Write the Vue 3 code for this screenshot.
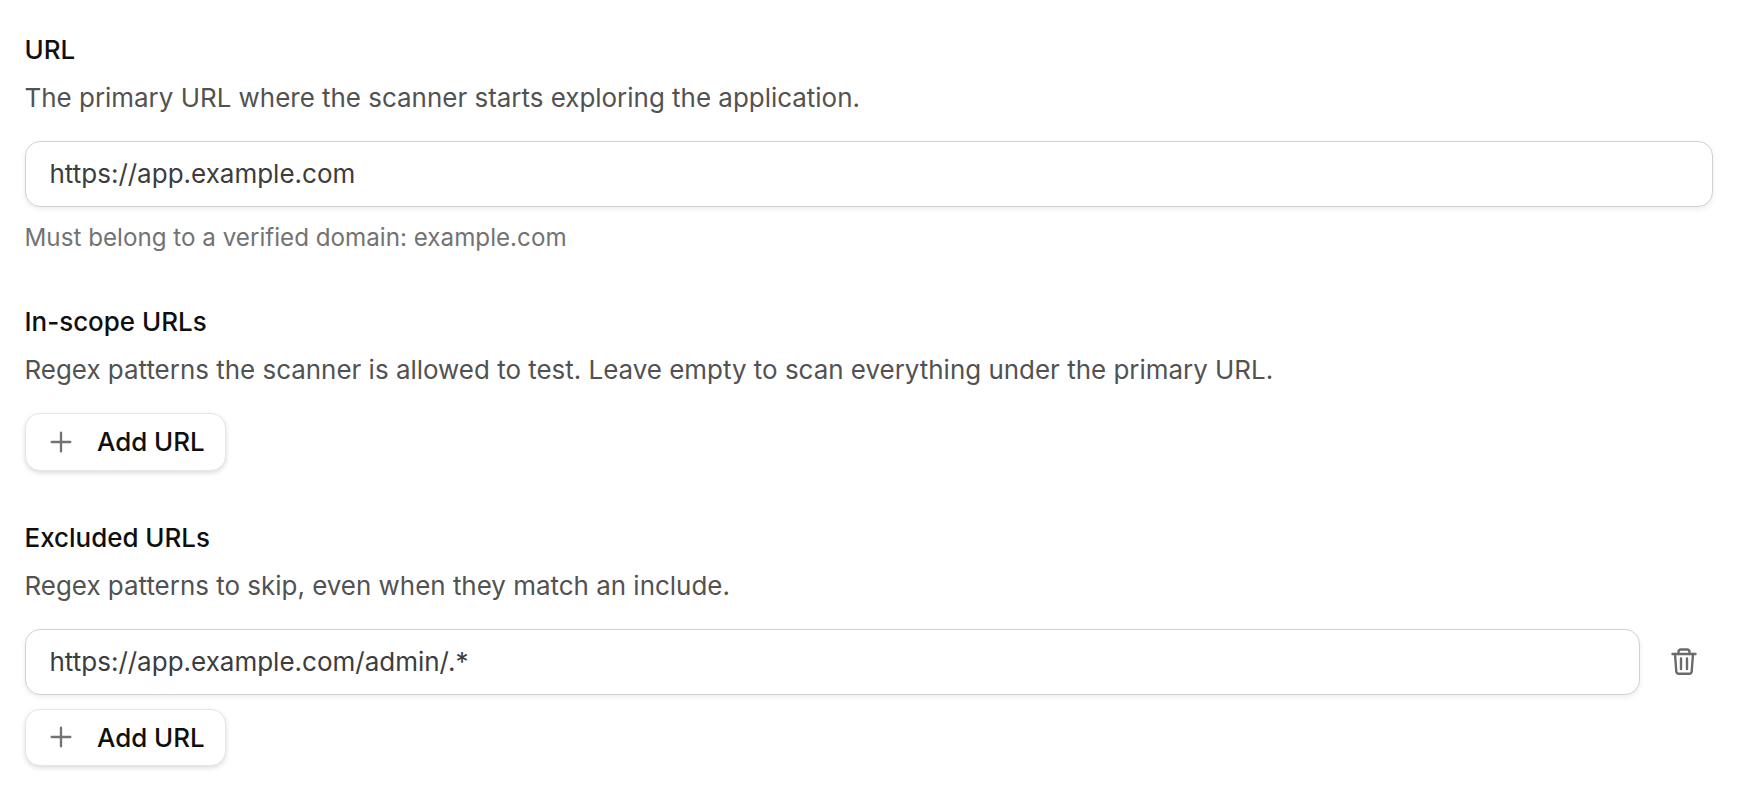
<script setup>
const plus = 'M4 12h16M12 4v16'
</script>

<template>
  <main class="form">
    <section class="field">
      <h3 class="label">URL</h3>
      <p class="desc">The primary URL where the scanner starts exploring the application.</p>
      <div class="input">https://app.example.com</div>
      <p class="hint">Must belong to a verified domain: example.com</p>
    </section>

    <section class="field compact">
      <h3 class="label">In-scope URLs</h3>
      <p class="desc">Regex patterns the scanner is allowed to test. Leave empty to scan everything under the primary URL.</p>
      <button class="add" type="button">
        <svg class="plus" viewBox="0 0 24 24" fill="none" stroke="currentColor" stroke-width="2" stroke-linecap="round"><path :d="plus" /></svg>
        <span>Add URL</span>
      </button>
    </section>

    <section class="field">
      <h3 class="label">Excluded URLs</h3>
      <p class="desc">Regex patterns to skip, even when they match an include.</p>
      <div class="row">
        <div class="input grow">https://app.example.com/admin/.*</div>
        <button class="trash" type="button" aria-label="Remove">
          <svg viewBox="0 0 28 28" fill="none" stroke="currentColor" stroke-width="2.4" stroke-linecap="round" stroke-linejoin="round">
            <path d="M2.5 6h23" />
            <path d="M8.5 6V4a2.5 2.5 0 0 1 2.5-2.5h6a2.5 2.5 0 0 1 2.5 2.5v2" />
            <path d="M5 6l1.3 17.5a2.5 2.5 0 0 0 2.5 2.3h10.4a2.5 2.5 0 0 0 2.5-2.3L23 6" />
            <path d="M11 10.5V21M17 10.5V21" />
          </svg>
        </button>
      </div>
      <button class="add tight" type="button">
        <svg class="plus" viewBox="0 0 24 24" fill="none" stroke="currentColor" stroke-width="2" stroke-linecap="round"><path :d="plus" /></svg>
        <span>Add URL</span>
      </button>
    </section>
  </main>
</template>

<style scoped>
.form {
  box-sizing: border-box;
  width: 1742px;
  padding: 32px 29px 0 24.5px;
  font-family: Inter, "Liberation Sans", sans-serif;
  color: #0f0f10;
}
.field { display: flex; flex-direction: column; align-items: flex-start; margin-bottom: 50px; }
.field.compact { margin-bottom: 49px; }
.label { margin: 0; font-size: 25.95px; font-weight: 500; line-height: 36px; }
.desc { margin: 12px 0 0; font-size: 25.95px; line-height: 36px; color: #525252; }
.hint { margin: 15px 0 0; font-size: 24.2px; line-height: 32px; color: #737373; }
.input {
  box-sizing: border-box;
  width: 100%;
  height: 66px;
  margin-top: 25px;
  padding: 0 24px 1px;
  display: flex;
  align-items: center;
  font-size: 26px;
  color: #3d3d3d;
  background: #fff;
  border: 1.25px solid #d4d0d0;
  border-radius: 15px;
  box-shadow: 0 2px 5px rgba(0, 0, 0, 0.08);
}
.row { width: 100%; display: flex; align-items: center; margin-top: 25px; gap: 13px; }
.input.grow { flex: 1; width: auto; margin-top: 0; }
.trash {
  box-sizing: border-box;
  width: 60px;
  height: 60px;
  padding: 0 0 0 2px;
  display: flex;
  align-items: center;
  justify-content: center;
  background: none;
  border: 0;
  color: #6b6b6b;
}
.trash svg { width: 28px; height: 28px; }
.add {
  box-sizing: border-box;
  height: 57.5px;
  margin-top: 25px;
  padding: 0 20.4px 0 21.5px;
  display: inline-flex;
  align-items: center;
  gap: 22px;
  font: 500 25.9px Inter, "Liberation Sans", sans-serif;
  color: #0f0f10;
  background: #fff;
  border: 1.25px solid #e5e5e5;
  border-radius: 15px;
  box-shadow: 0 2px 5px rgba(0, 0, 0, 0.14);
}
.add.tight { margin-top: 14px; }
.plus { width: 28px; height: 28px; color: #737373; }
</style>
